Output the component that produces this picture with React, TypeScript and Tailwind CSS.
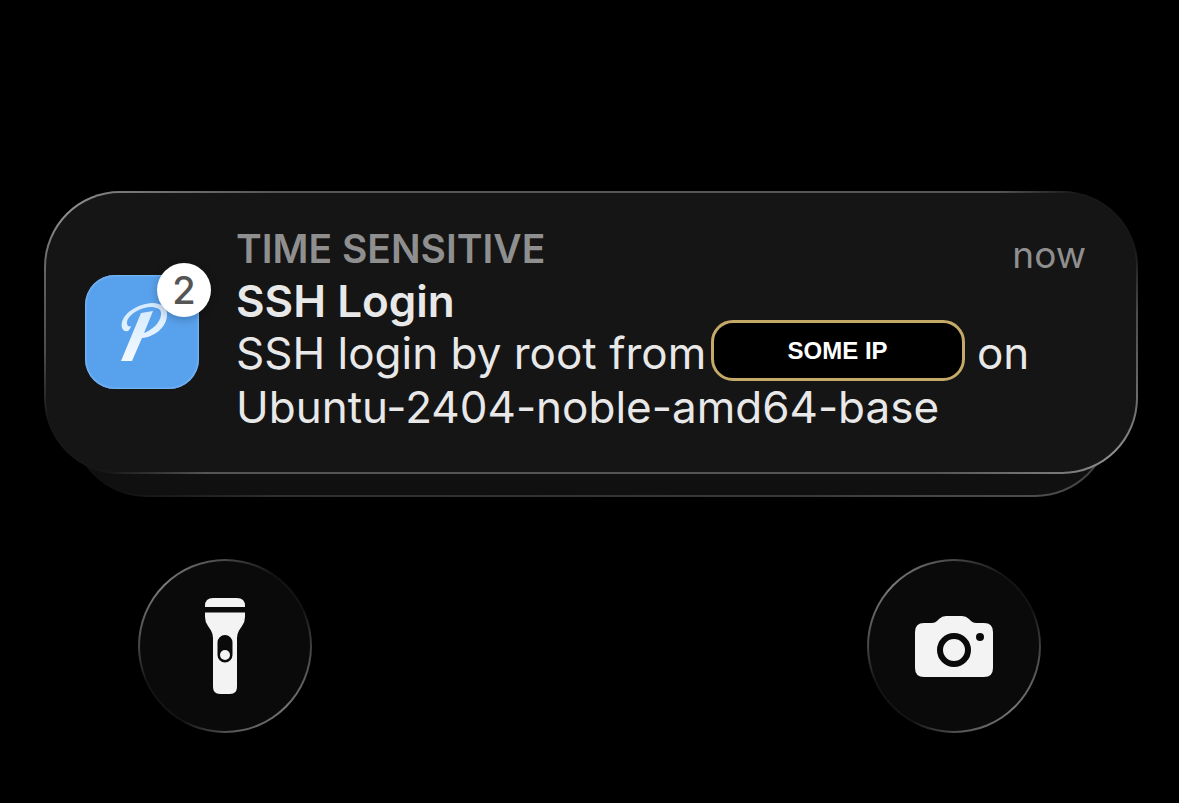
import React from 'react';

function PushoverLogo() {
  return (
    <svg viewBox="0 0 114 114" className="size-full" aria-hidden="true">
      <defs>
        <linearGradient id="logoFill" x1="0" y1="0" x2="0" y2="1">
          <stop offset="0" stopColor="#d3e9fd" />
          <stop offset="1" stopColor="#f4faff" />
        </linearGradient>
      </defs>
      <path
        fill="url(#logoFill)"
        d="M56 38 L68 36 L59 58 C67 55 75 48 76 40 C77 34 72 32 65 32 C53 33 42 41 42 48 C42 51 44 52 46 51 C45 55 43 57 40 56 C37 55 36 51 37 47 C40 37 53 29 67 28 C77 28 83 33 82 41 C81 53 69 62 57 63 L47 86 L36 86 Z"
      />
    </svg>
  );
}

function FlashlightIcon() {
  return (
    <svg viewBox="0 0 40 96" className="h-24 w-10" fill="#f3f3f3" aria-hidden="true">
      <path d="M0 9 V8 Q0 0 8 0 H32 Q40 0 40 8 V9 Z" />
      <path
        fillRule="evenodd"
        d="M0 14.500 H40 V19 Q40 24 37 28 L34 32.500 Q32 36 32 40 V89 Q32 96 25 96 H15 Q8 96 8 89 V40 Q8 36 6 32.500 L3 28 Q0 24 0 19 Z M20 37 A7.500 7.500 0 0 0 12.500 44.500 V57 A7.500 7.500 0 0 0 27.500 57 V44.500 A7.500 7.500 0 0 0 20 37 Z"
      />
      <circle cx="20" cy="57" r="5" />
    </svg>
  );
}

function CameraIcon() {
  return (
    <svg viewBox="0 0 78 61" className="h-[61px] w-[78px]" aria-hidden="true">
      <path
        fill="#f3f3f3"
        d="M9 7 H17 Q20 7 22 5 L24 3 Q27 0 31 0 H47 Q51 0 54 3 L56 5 Q58 7 61 7 H69 Q78 7 78 16 V52 Q78 61 69 61 H9 Q0 61 0 52 V16 Q0 7 9 7 Z"
      />
      <circle cx="39" cy="34" r="14" fill="#f3f3f3" stroke="#0a0a0a" strokeWidth="6" />
      <circle cx="65" cy="21" r="4" fill="#0a0a0a" />
    </svg>
  );
}

type RoundButtonProps = {
  label: string;
  children: React.ReactNode;
};

function RoundButton({ label, children }: RoundButtonProps) {
  return (
    <button
      type="button"
      aria-label={label}
      className="size-[174px] rounded-full bg-[conic-gradient(#484848_0deg,#141414_35deg,#141414_65deg,#484848_95deg,#757575_135deg,#585858_175deg,#141414_210deg,#141414_245deg,#505050_275deg,#7a7a7a_315deg,#484848_360deg)] p-0.5"
    >
      <span className="flex size-full items-center justify-center rounded-full bg-[#0a0a0a]">
        {children}
      </span>
    </button>
  );
}

function Notification() {
  return (
    <section>
      {/* front card, the outer div is the light edge */}
      <div className="relative z-10 rounded-[76px] bg-[conic-gradient(#555_0deg,#555_71deg,#171717_74deg,#171717_81deg,#4c4c4c_88deg,#707070_98deg,#909090_103deg,#707070_108deg,#555_112deg,#555_250deg,#171717_254deg,#171717_261deg,#4c4c4c_268deg,#606060_276deg,#909090_283deg,#707070_288deg,#555_294deg)] p-0.5">
        <div className="flex gap-[37px] rounded-[74px] bg-[#151515] pt-[29px] pr-[50px] pb-[38px] pl-[39px]">
          <div className="relative mt-2 size-[114px] shrink-0 self-center rounded-[30px] bg-[#58a1ec] shadow-[inset_0_0_2px_1px_#7ebaf5]">
            <PushoverLogo />
            <span className="absolute -top-3 -right-3 flex size-[54px] items-center justify-center rounded-full bg-white text-[38px] font-medium text-[#555] shadow-[0_2px_8px_rgba(0,0,0,0.25)]">
              2
            </span>
          </div>
          <div className="min-w-0 flex-1">
            <div className="flex items-start justify-between">
              <div>
                <p className="text-[39px] leading-[54px] font-semibold text-[#8f8f8f]">TIME SENSITIVE</p>
                <h1 className="text-[44px] leading-[50px] font-semibold">SSH Login</h1>
              </div>
              <time className="pt-1.5 text-[37px] leading-[54px] text-[#8f8f8f]">now</time>
            </div>
            <p className="text-[44px] leading-[54px]">
              SSH login by root from{' '}
              <span className="-mt-5 -mb-2 -ml-2 inline-flex h-[61px] w-[254px] items-center justify-center rounded-[22px] border-3 border-[#c4a968] bg-black align-middle font-['Liberation_Sans',sans-serif] text-2xl font-bold text-white">
                SOME IP
              </span>{' '}
              on
              <br />
              Ubuntu-2404-noble-amd64-base
            </p>
          </div>
        </div>
      </div>
      {/* second card of the stack */}
      <div className="mx-[27px] -mt-[137px] h-40 rounded-[76px] bg-[conic-gradient(#303030_0deg,#303030_90deg,#4c4c4c_100deg,#383838_110deg,#303030_256deg,#111_261deg,#111_360deg)] p-0.5">
        <div className="size-full rounded-[74px] bg-[#101010]" />
      </div>
    </section>
  );
}

export default function App() {
  return (
    <main className="min-h-screen bg-black pt-[191px] pr-[41px] pl-11 font-[Inter,sans-serif] text-[#e8e8e8]">
      <Notification />
      <nav className="mt-[62px] flex justify-between pr-[97px] pl-[94px]">
        <RoundButton label="Flashlight">
          <FlashlightIcon />
        </RoundButton>
        <RoundButton label="Camera">
          <CameraIcon />
        </RoundButton>
      </nav>
    </main>
  );
}
